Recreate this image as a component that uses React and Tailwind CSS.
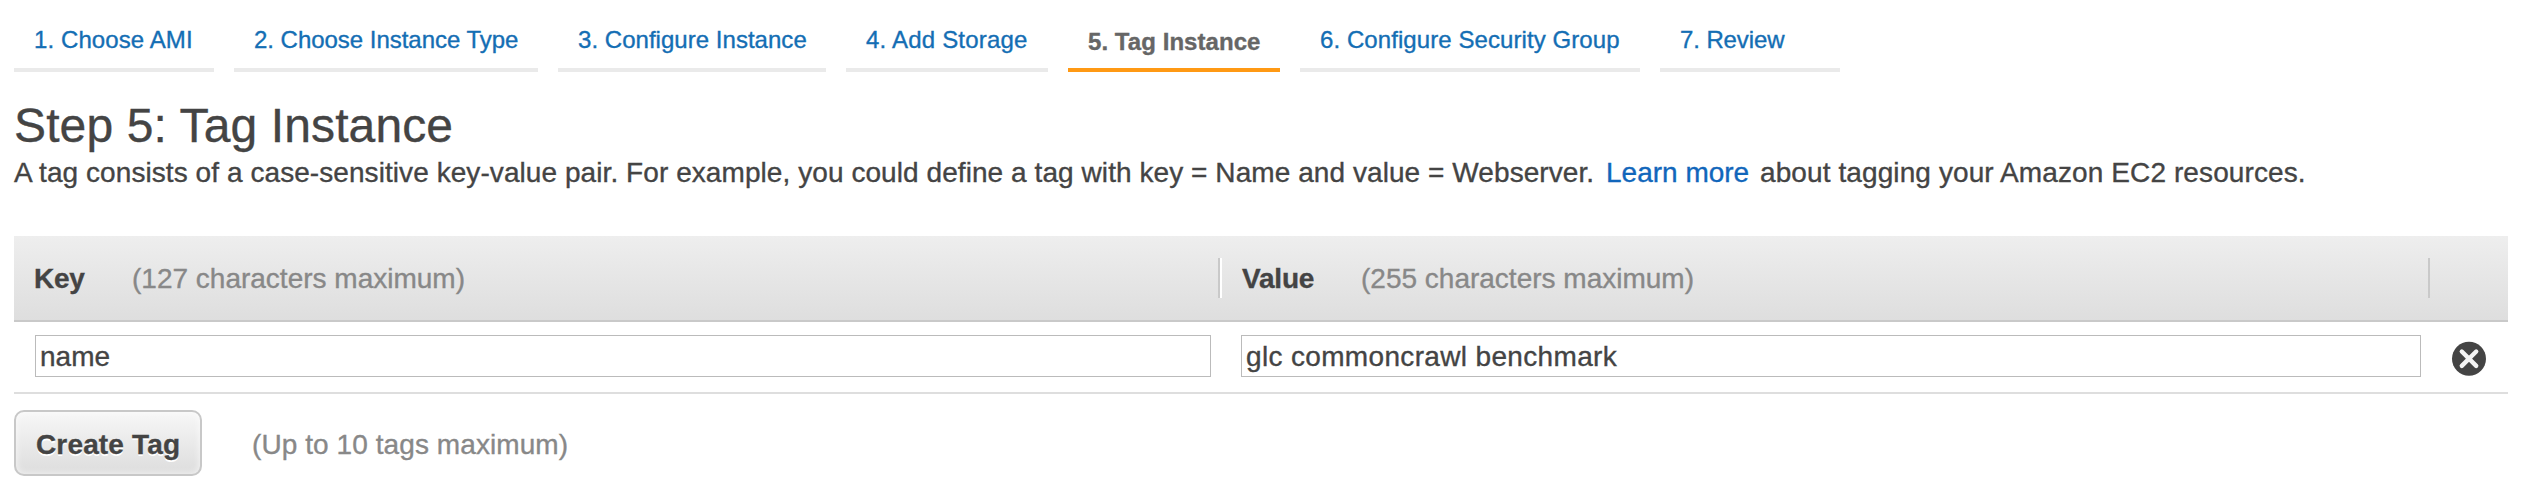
const steps = [
  { label: "1. Choose AMI", box: "w-[200px] tracking-[0.1px]" },
  { label: "2. Choose Instance Type", box: "w-[304px] tracking-[-0.03px]" },
  { label: "3. Configure Instance", box: "w-[268px] tracking-[0.03px]" },
  { label: "4. Add Storage", box: "w-[202px] tracking-[0.2px]" },
  { label: "5. Tag Instance", box: "w-[212px] tracking-[0.06px]", active: true },
  { label: "6. Configure Security Group", box: "w-[340px] tracking-[0.08px]" },
  { label: "7. Review", box: "w-[180px] tracking-[-0.1px]" },
];

const idleTab = "border-[#eaeaea] pt-[26px] pb-[15px] text-[#146eb4]";
const activeTab = "border-[#ff9914] pt-[28px] pb-[13px] font-bold text-[#666]";

function Steps() {
  return (
    <nav className="flex gap-5">
      {steps.map((s) => (
        <a
          key={s.label}
          className={`block shrink-0 whitespace-nowrap border-b-4 pl-5 text-[24px] leading-[27px] ${s.box} ${s.active ? activeTab : idleTab}`}
        >
          {s.label}
        </a>
      ))}
    </nav>
  );
}

function RemoveIcon() {
  return (
    <svg width="36" height="36" viewBox="0 0 36 36" className="mt-[19px] ml-[30px] shrink-0">
      <circle cx="18" cy="17.7" r="17" fill="#444" />
      <path d="M10.8 10.5 25.2 24.9M25.2 10.5 10.8 24.9" stroke="#f4f4f4" strokeWidth="4.4" strokeLinecap="round" />
    </svg>
  );
}

const inputClass =
  "mt-[13px] block h-[42px] shrink-0 rounded-none border border-[#bbb] bg-white pt-[5px] pb-[4px] pl-1 leading-[31px] text-[#444] outline-none";

export default function App() {
  return (
    <div className="h-[494px] overflow-hidden bg-white px-[14px] font-['Liberation_Sans',Arial,sans-serif] text-[28px] leading-[31px] text-[#444] [-webkit-text-stroke:0.35px_currentColor]">
      <Steps />

      <h1 className="mt-[27px] text-[48px] leading-[53px] tracking-[0.12px]">Step 5: Tag Instance</h1>
      <p className="mt-[5px] flex whitespace-nowrap tracking-[0.07px]">
        <span className="w-[1592px]">
          A tag consists of a case-sensitive key-value pair. For example, you could define a tag with key = Name and
          value = Webserver.
        </span>
        <a className="w-[154px] tracking-normal text-[#1166bb]">Learn more</a>
        <span className="tracking-[0.1px]">about tagging your Amazon EC2 resources.</span>
      </p>

      <section className="mt-[48px] w-[2494px]">
        <header className="flex h-[86px] border-b-2 border-[#c9c9c9] bg-linear-to-b from-[#eeeeee] to-[#dedede]">
          <div className="flex w-[1204px] pt-[27px] pl-5">
            <b className="w-[98px] tracking-[-0.3px]">Key</b>
            <span className="text-[#888]">(127 characters maximum)</span>
          </div>
          <div className="mt-[22px] h-10 w-1 border-r-2 border-l-2 border-r-white border-l-[#c9c9c9]" />
          <div className="flex w-[1206px] pt-[27px] pl-5">
            <b className="w-[119px] tracking-[-0.2px]">Value</b>
            <span className="text-[#888]">(255 characters maximum)</span>
          </div>
          <div className="mt-[22px] h-10 w-0.5 bg-[#c9c9c9]" />
        </header>

        <div className="flex h-[72px] border-b-2 border-[#dedede] pl-[21px]">
          <input className={`${inputClass} w-[1176px]`} defaultValue="name" />
          <input className={`${inputClass} ml-[30px] w-[1180px] tracking-[0.34px]`} defaultValue="glc commoncrawl benchmark" />
          <RemoveIcon />
        </div>
      </section>

      <footer className="mt-4 flex">
        <button className="h-[66px] w-[188px] rounded-[10px] border-2 border-[#c8c8c8] bg-linear-to-b from-[#f7f7f7] to-[#dddddd] pt-[17px] pb-[14px] pl-[20px] text-left font-bold leading-[31px] tracking-[0.15px] whitespace-nowrap shadow-[inset_0_0_6px_1px_rgba(255,255,255,0.6)] [text-shadow:0_2px_0_#fff]">
          Create Tag
        </button>
        <span className="mt-[19px] ml-[50px] tracking-[0.08px] text-[#888]">(Up to 10 tags maximum)</span>
      </footer>
    </div>
  );
}
